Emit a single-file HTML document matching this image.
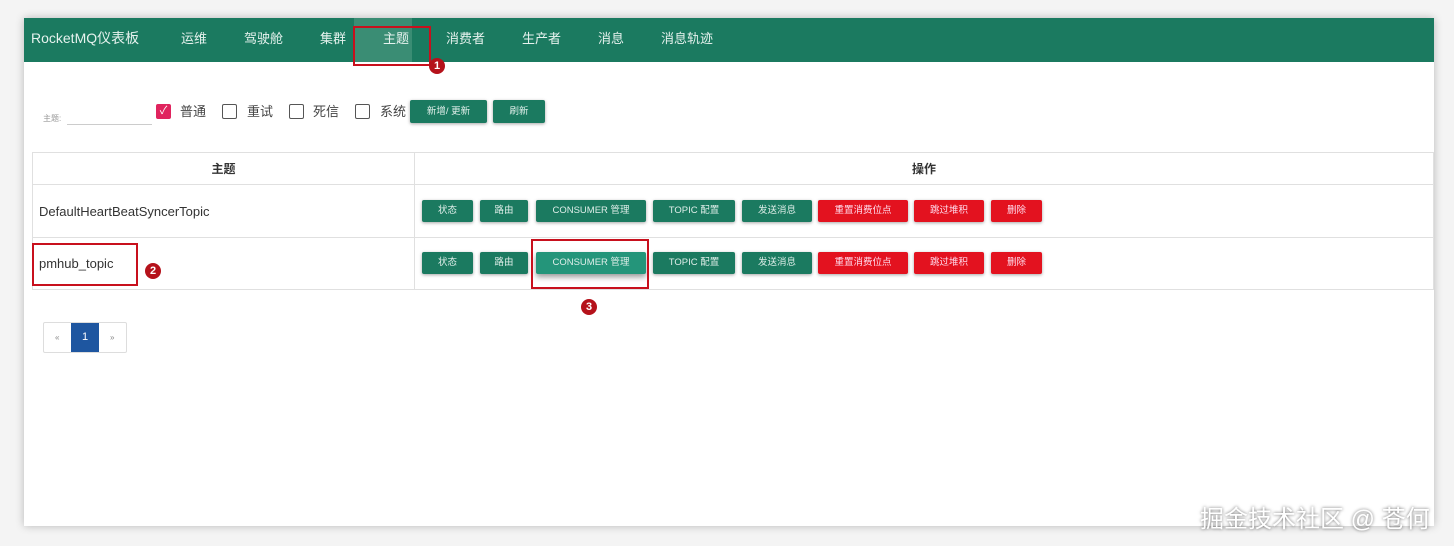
<!DOCTYPE html>
<html><head><meta charset="utf-8"><style>
*{margin:0;padding:0;box-sizing:border-box}
body{width:1454px;height:546px;background:#f4f4f4;position:relative;overflow:hidden;font-family:"Liberation Sans","Noto Sans CJK SC",sans-serif}
.card{position:absolute;left:24px;top:18px;width:1410px;height:508px;background:#fff;box-shadow:0 0 8px rgba(0,0,0,.25)}
.nav{position:absolute;left:0;top:0;width:1410px;height:44px;background:#1b7a60}
.nav span{position:absolute;top:10px;color:#e6f2ee;font-size:13px}
.hl{position:absolute;left:330px;top:0;width:58px;height:44px;background:#3a8d74}
.abs{position:absolute}
.red{border:2px solid #c8101d}
.num{position:absolute;width:16px;height:16px;border-radius:50%;background:#b5121b;color:#fff;font-size:11px;font-weight:bold;text-align:center;line-height:16px}
.cb{position:absolute;top:104px;width:15px;height:15px;border:1.5px solid #555;border-radius:2px}
.lbl{position:absolute;top:101px;font-size:13px;color:#444}
.btn{position:absolute;height:22px;color:#dfeee9;font-size:9.5px;text-align:center;line-height:22px;border-radius:2px;box-shadow:0 1px 3px rgba(0,0,0,.35);background:#1b7a60}
.r{background:#e3121f;color:#fde}
table{position:absolute;left:32px;top:152px;width:1402px;border-collapse:collapse}
td{border:1px solid #e0e0e0;font-size:13px;color:#333}
</style></head><body>
<div class="card">
<div class="nav"><div class="hl"></div>
<span style="left:7px;font-size:14px">RocketMQ仪表板</span>
<span style="left:157px">运维</span><span style="left:220px">驾驶舱</span><span style="left:296px">集群</span><span style="left:359px">主题</span><span style="left:422px">消费者</span><span style="left:498px">生产者</span><span style="left:574px">消息</span><span style="left:637px">消息轨迹</span>
</div>
</div>
<div class="abs red" style="left:353px;top:26px;width:78px;height:40px"></div>
<div class="num" style="left:429px;top:58px">1</div>
<div class="abs" style="left:43px;top:113px;font-size:8px;color:#999">主题:</div>
<div class="abs" style="left:67px;top:124px;width:85px;border-bottom:1px solid #ccc"></div>
<div class="cb" style="left:156px;background:#e0245e;border-color:#e0245e;color:#fff;font-size:11px;line-height:12px;text-align:center">✓</div>
<div class="lbl" style="left:180px">普通</div>
<div class="cb" style="left:222px"></div><div class="lbl" style="left:247px">重试</div>
<div class="cb" style="left:289px"></div><div class="lbl" style="left:313px">死信</div>
<div class="cb" style="left:355px"></div><div class="lbl" style="left:380px">系统</div>
<div class="btn" style="left:410px;top:100px;width:77px;height:23px;line-height:23px">新增/ 更新</div>
<div class="btn" style="left:493px;top:100px;width:52px;height:23px;line-height:23px">刷新</div>
<table>
<tr style="height:32px"><td style="width:382px;text-align:center;font-weight:bold;font-size:12px">主题</td><td style="text-align:center;font-weight:bold;font-size:12px">操作</td></tr>
<tr style="height:53px"><td style="padding-left:6px">DefaultHeartBeatSyncerTopic</td><td></td></tr>
<tr style="height:52px"><td style="padding-left:6px">pmhub_topic</td><td></td></tr>
</table>
<div class="btn" style="left:422px;top:200px;width:51px">状态</div>
<div class="btn" style="left:480px;top:200px;width:48px">路由</div>
<div class="btn" style="left:536px;top:200px;width:110px">CONSUMER 管理</div>
<div class="btn" style="left:653px;top:200px;width:82px">TOPIC 配置</div>
<div class="btn" style="left:742px;top:200px;width:70px">发送消息</div>
<div class="btn r" style="left:818px;top:200px;width:90px">重置消费位点</div>
<div class="btn r" style="left:914px;top:200px;width:70px">跳过堆积</div>
<div class="btn r" style="left:991px;top:200px;width:51px">删除</div>
<div class="btn" style="left:422px;top:252px;width:51px">状态</div>
<div class="btn" style="left:480px;top:252px;width:48px">路由</div>
<div class="btn" style="left:536px;top:252px;width:110px;background:#24957a;box-shadow:0 3px 6px rgba(0,0,0,.4)">CONSUMER 管理</div>
<div class="btn" style="left:653px;top:252px;width:82px">TOPIC 配置</div>
<div class="btn" style="left:742px;top:252px;width:70px">发送消息</div>
<div class="btn r" style="left:818px;top:252px;width:90px">重置消费位点</div>
<div class="btn r" style="left:914px;top:252px;width:70px">跳过堆积</div>
<div class="btn r" style="left:991px;top:252px;width:51px">删除</div>
<div class="abs red" style="left:32px;top:243px;width:106px;height:43px"></div>
<div class="num" style="left:145px;top:263px">2</div>
<div class="abs red" style="left:531px;top:239px;width:118px;height:50px"></div>
<div class="num" style="left:581px;top:299px">3</div>
<div class="abs" style="left:43px;top:322px;width:84px;height:31px;border:1px solid #ddd;border-radius:2px;font-size:8px;color:#888">
<span class="abs" style="left:11px;top:10px">«</span>
<div class="abs" style="left:27px;top:0;width:28px;height:29px;background:#1e56a0;color:#fff;font-size:11px;text-align:center;line-height:29px">1</div>
<span class="abs" style="left:66px;top:10px">»</span></div>
<div class="abs" style="left:1200px;top:499px;font-size:24px;color:#fff;text-shadow:0 0 3px rgba(0,0,0,.6)">掘金技术社区 @ 苍何</div>
</body></html>
